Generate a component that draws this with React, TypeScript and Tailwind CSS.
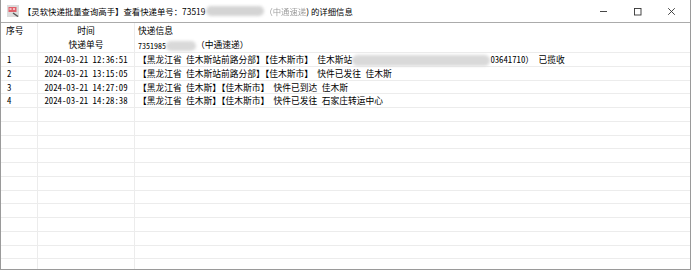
import React from 'react';

const Blur: React.FC<{ w: string }> = ({ w }) => (
  <span className={`inline-block align-middle h-[11px] ${w} rounded-full bg-[#d9d9d9] blur-[1.5px]`} />
);

const rows: { n: string; t: string; info: React.ReactNode }[] = [
  {
    n: '1',
    t: '2024-03-21 12:36:51',
    info: (
      <>
        【黑龙江省 佳木斯站前路分部】【佳木斯市】 佳木斯站
        <Blur w="w-[138px]" />
        03641710） 已揽收
      </>
    ),
  },
  { n: '2', t: '2024-03-21 13:15:05', info: '【黑龙江省 佳木斯站前路分部】【佳木斯市】 快件已发往 佳木斯' },
  { n: '3', t: '2024-03-21 14:27:09', info: '【黑龙江省 佳木斯】【佳木斯市】 快件已到达 佳木斯' },
  { n: '4', t: '2024-03-21 14:28:38', info: '【黑龙江省 佳木斯】【佳木斯市】 快件已发往 石家庄转运中心' },
];

const App: React.FC = () => {
  const empty = Array.from({ length: 12 });

  return (
    <div className="w-[692px] h-[272px] bg-white overflow-hidden font-['Noto_Sans_Mono_CJK_SC','Noto_Sans_CJK_SC',sans-serif] text-black">
      <div className="w-[691px] h-[270px] flex flex-col border-l border-r border-b border-[#9a9a9a] overflow-hidden">
        {/* Title bar */}
        <div className="h-[23px] shrink-0 flex items-center border-b border-[#ababab] bg-white">
          <div className="w-[22px] flex justify-center pl-[1px]">
            <svg width="12" height="12" viewBox="0 0 12 12">
              <rect x="0" y="0" width="12" height="12" fill="#dcdcdc" />
              <rect x="1.5" y="2" width="8" height="5" fill="#e0606a" />
              <rect x="2.5" y="3" width="2" height="2" fill="#f4c0c4" />
              <rect x="6" y="3" width="2" height="2" fill="#f4c0c4" />
              <path d="M6 8 L11 11.5" stroke="#555" strokeWidth="1.4" />
            </svg>
          </div>
          <span className="text-[8.4px] leading-none font-['Noto_Sans_CJK_SC',sans-serif] whitespace-nowrap flex items-center">
            【灵软快递批量查询高手】查看快递单号：73519
            <span className="inline-block w-[58px] h-[10px] rounded-full bg-[#d4d4d4] blur-[1.5px] ml-[1px]" />
            <span className="opacity-40 blur-[0.6px]">（中通速递</span>) 的详细信息
          </span>
          <div className="ml-auto flex items-center h-full">
            <div className="w-[34px] h-full flex items-center justify-center">
              <svg width="9" height="9" viewBox="0 0 9 9">
                <path d="M1 4.5 H8" stroke="#333" strokeWidth="0.9" />
              </svg>
            </div>
            <div className="w-[34px] h-full flex items-center justify-center">
              <svg width="9" height="9" viewBox="0 0 9 9">
                <rect x="1.5" y="1.5" width="6.5" height="6.5" fill="none" stroke="#333" strokeWidth="0.9" />
              </svg>
            </div>
            <div className="w-[34px] h-full flex items-center justify-center mr-[2px]">
              <svg width="9" height="9" viewBox="0 0 9 9">
                <path d="M1.2 1.2 L7.8 7.8 M7.8 1.2 L1.2 7.8" stroke="#333" strokeWidth="0.9" />
              </svg>
            </div>
          </div>
        </div>

        {/* Grid */}
        <div className="flex-1 text-[8.75px] leading-none">
          {/* Header */}
          <div className="grid grid-cols-[37px_97px_1fr] h-[30px] border-b border-[#ececec]">
            <div className="border-r border-[#ececec] flex flex-col">
              <div className="h-[16px] pl-[5px] flex items-center">序号</div>
            </div>
            <div className="border-r border-[#ececec] flex flex-col">
              <div className="h-[16px] flex items-center justify-center">时间</div>
              <div className="h-[13px] flex items-center justify-center">快递单号</div>
            </div>
            <div className="flex flex-col pl-[3px]">
              <div className="h-[16px] flex items-center">快递信息</div>
              <div className="h-[13px] flex items-center whitespace-nowrap">
                <span className="text-[8px]">7351985</span>
                <span className="inline-block w-[30px] h-[10px] rounded-full bg-[#d9d9d9] blur-[1.5px]" />
                （中通速递）
              </div>
            </div>
          </div>

          {rows.map((r) => (
            <div key={r.n} className="grid grid-cols-[37px_97px_1fr] h-[13.75px] border-b border-[#ececec]">
              <div className="border-r border-[#ececec] pl-[6px] pt-[2px] flex items-center">{r.n}</div>
              <div className="border-r border-[#ececec] pt-[2px] flex items-center justify-center">{r.t}</div>
              <div className="pl-[3px] pt-[2px] flex items-center whitespace-nowrap">{r.info}</div>
            </div>
          ))}

          {empty.map((_, i) => (
            <div key={i} className="grid grid-cols-[37px_97px_1fr] h-[13.75px] border-b border-[#ececec]">
              <div className="border-r border-[#ececec]" />
              <div className="border-r border-[#ececec]" />
              <div />
            </div>
          ))}
        </div>
      </div>
    </div>
  );
};

export default App;
